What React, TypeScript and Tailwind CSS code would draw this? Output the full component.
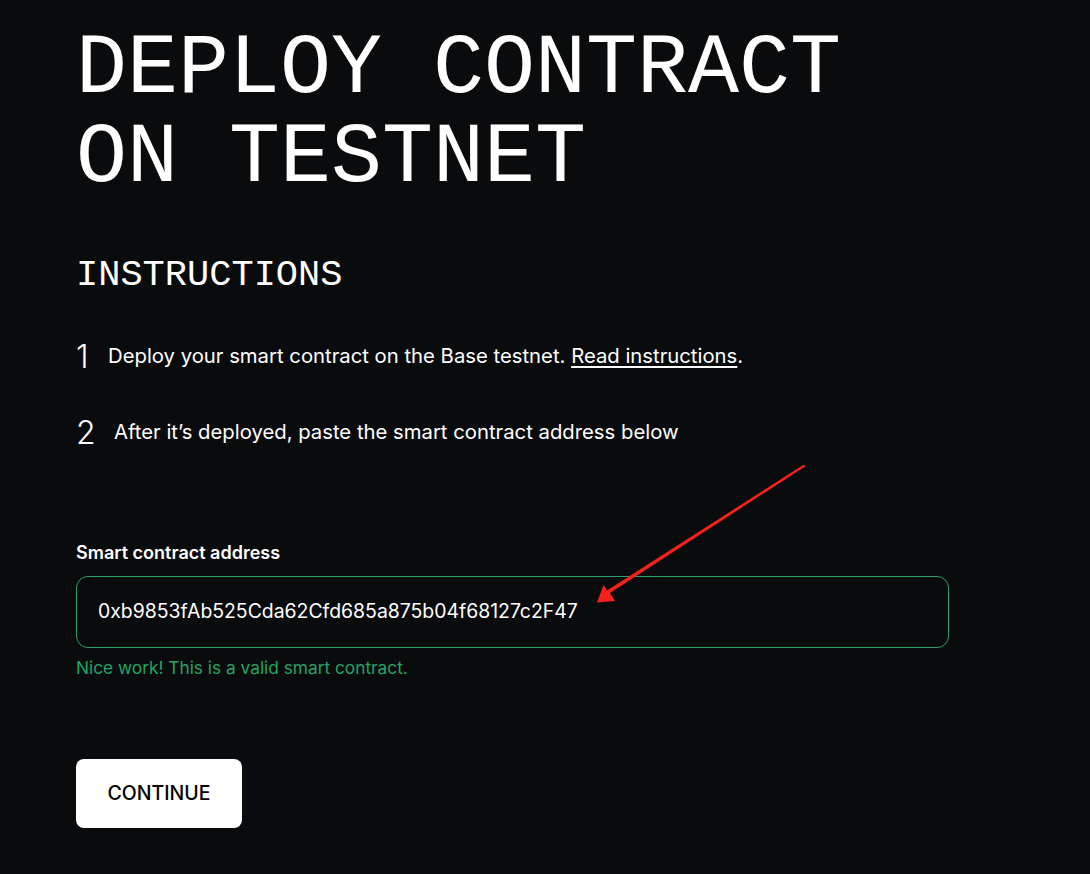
import React from 'react'

const mono = { fontFamily: '"Liberation Mono", "DejaVu Sans Mono", monospace' }
const sans = { fontFamily: 'Inter, "Liberation Sans", sans-serif' }

function Arrow() {
  return (
    <svg
      className="pointer-events-none absolute left-0 top-0"
      width="1090"
      height="874"
      viewBox="0 0 1090 874"
    >
      <path
        d="M804 464.5 L805 466.5 L610 593 L615 601 L597 602.5 L603.5 585 L607 590.5 Z"
        fill="#f5211a"
      />
    </svg>
  )
}

export default function App() {
  return (
    <div className="relative min-h-[874px] w-full bg-[#0a0b0d] text-white" style={sans}>
      <div className="flex flex-col px-[76px] pt-[25px]">
        <h1 className="text-[85px] leading-[89px]" style={mono}>
          DEPLOY CONTRACT
          <br />
          ON TESTNET
        </h1>

        <h2 className="mt-[50px] text-[37px] leading-[44px]" style={mono}>
          INSTRUCTIONS
        </h2>

        <ol className="mt-[36px] flex flex-col gap-[34px]">
          <li className="flex items-baseline">
            <span className="w-[32px] translate-y-[5px] text-[32px] font-light leading-[38px]">1</span>
            <span className="text-[20.3px] leading-[38px]">
              Deploy your smart contract on the Base testnet.{' '}
              <a className="underline underline-offset-[3px]" href="#">Read instructions</a>.
            </span>
          </li>
          <li className="flex items-baseline">
            <span className="w-[38px] translate-y-[5px] text-[32px] font-light leading-[38px]">2</span>
            <span className="text-[20.3px] leading-[38px]">
              After it’s deployed, paste the smart contract address below
            </span>
          </li>
        </ol>

        <label className="mt-[90px] text-[18px] font-semibold leading-[24px]">
          Smart contract address
        </label>
        <div className="mt-[11px] flex h-[72px] w-[873px] items-center rounded-[12px] border border-[#2f9e6b] px-[21px]">
          <span className="text-[19.4px]">0xb9853fAb525Cda62Cfd685a875b04f68127c2F47</span>
        </div>
        <p className="mt-[8px] text-[17.3px] leading-[24px] text-[#23a466]">
          Nice work! This is a valid smart contract.
        </p>

        <button className="mt-[79px] flex h-[69px] w-[166px] items-center justify-center rounded-[8px] bg-white text-[19.5px] font-medium text-black">
          CONTINUE
        </button>
      </div>
      <Arrow />
    </div>
  )
}
